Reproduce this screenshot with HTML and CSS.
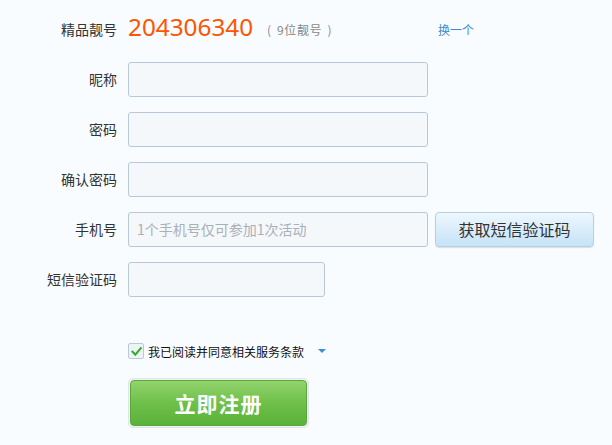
FILE: index.html
```html
<!DOCTYPE html>
<html lang="zh-CN">
<head>
<meta charset="utf-8">
<title>注册</title>
<link rel="stylesheet" href="styles.css">
</head>
<body>
<form class="form">
  <div class="row">
    <label class="label">精品靓号</label>
    <div class="field top">
      <span class="number">204306340</span>
      <span class="note">(&nbsp;9位靓号&nbsp;)</span>
      <a class="change" href="#">换一个</a>
    </div>
  </div>
  <div class="row">
    <label class="label">昵称</label>
    <div class="field"><input class="input" type="text"></div>
  </div>
  <div class="row">
    <label class="label">密码</label>
    <div class="field"><input class="input" type="password"></div>
  </div>
  <div class="row">
    <label class="label">确认密码</label>
    <div class="field"><input class="input" type="password"></div>
  </div>
  <div class="row">
    <label class="label">手机号</label>
    <div class="field">
      <input class="input" type="text" placeholder="1个手机号仅可参加1次活动">
      <button class="sms-btn" type="button">获取短信验证码</button>
    </div>
  </div>
  <div class="row">
    <label class="label">短信验证码</label>
    <div class="field"><input class="input short" type="text"></div>
  </div>
  <div class="agree">
    <span class="check">
      <svg width="13" height="13" viewBox="0 0 13 13"><path d="M2.5 6.8 L5.3 9.6 L10.8 3.2" fill="none" stroke="#35ae2f" stroke-width="2.1" stroke-linecap="square"/></svg>
    </span>
    <span class="agree-text">我已阅读并同意相关服务条款</span>
    <span class="arrow"></span>
  </div>
  <div class="submit-wrap">
    <button class="submit" type="button">立即注册</button>
  </div>
</form>
</body>
</html>
```

FILE: styles.css
```css
html, body {
  margin: 0;
  padding: 0;
}
body {
  background: #f8fcff;
  font-family: "Noto Sans CJK SC", "Noto Sans", sans-serif;
  color: #333;
  width: 612px;
  height: 445px;
  overflow: hidden;
}
.form {
  padding-top: 12px;
  display: flex;
  flex-direction: column;
  gap: 16px;
}
.row {
  display: flex;
  align-items: center;
  height: 34px;
}
.label {
  width: 117px;
  text-align: right;
  font-size: 14px;
  color: #333;
  flex: none;
}
.field {
  margin-left: 11px;
  display: flex;
  align-items: center;
}
.top {
  height: 34px;
}
.number {
  font-family: "Noto Sans", sans-serif;
  font-size: 24.3px;
  color: #ff5400;
  line-height: 34px;
  position: relative;
  top: -2px;
}
.note {
  margin-left: 14px;
  font-size: 12px;
  color: #888;
  word-spacing: 2px;
  letter-spacing: 0.6px;
}
.change {
  margin-left: 106px;
  font-size: 12px;
  color: #3b8bd3;
  text-decoration: none;
}
.input {
  box-sizing: border-box;
  width: 300px;
  height: 35px;
  border: 1px solid #b9c8d6;
  border-radius: 3px;
  background: #f5f8fb;
  padding: 0 8px;
  font-family: "Noto Sans CJK SC", sans-serif;
  font-size: 14px;
  color: #333;
  outline: none;
}
.input::placeholder {
  color: #aab0b6;
}
.input.short {
  width: 197px;
}
.sms-btn {
  box-sizing: border-box;
  margin-left: 7px;
  width: 159px;
  height: 35px;
  border: 1px solid #b6cfe2;
  border-radius: 4px;
  background: linear-gradient(#eef7fe, #c6e3f7);
  box-shadow: 0 1px 1px rgba(0,0,0,0.12);
  font-family: "Noto Sans CJK SC", sans-serif;
  font-size: 16px;
  color: #333;
  padding: 0;
}
.agree {
  margin-top: 31px;
  margin-left: 128px;
  display: flex;
  align-items: center;
  height: 16px;
}
.check {
  box-sizing: border-box;
  width: 16px;
  height: 16px;
  border: 1px solid #b9c9d8;
  border-radius: 2px;
  background: #eef3f8;
  display: flex;
  align-items: center;
  justify-content: center;
}
.agree-text {
  margin-left: 4px;
  font-size: 12px;
  color: #111;
}
.arrow {
  margin-left: 14px;
  width: 0;
  height: 0;
  border-left: 4px solid transparent;
  border-right: 4px solid transparent;
  border-top: 4px solid #3d8fd2;
}
.submit-wrap {
  margin-top: 3px;
  margin-left: 128px;
  width: 181px;
  height: 50px;
  box-sizing: border-box;
  border: 1px solid #dfe5e8;
  border-radius: 5px;
  padding: 1px;
  background: #eef2f3;
}
.submit {
  width: 100%;
  height: 100%;
  border: 1px solid #5aa83a;
  border-radius: 4px;
  background: linear-gradient(#93d36e, #6ec04a 50%, #5ab13a);
  color: #fff;
  font-family: "Noto Sans CJK SC", sans-serif;
  font-size: 21px;
  font-weight: bold;
  letter-spacing: 1px;
  padding: 0;
}
```
